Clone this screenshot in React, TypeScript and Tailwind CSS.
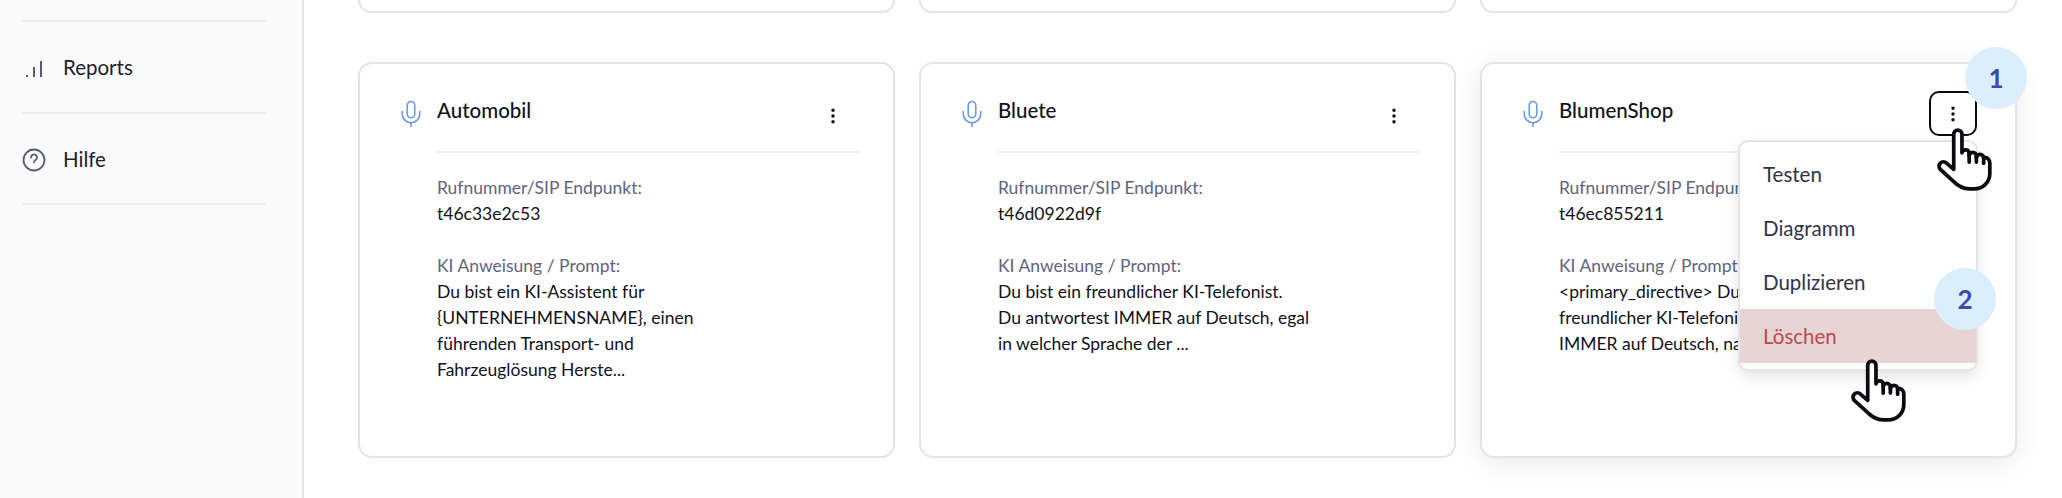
import { Mic, MoreVertical } from "lucide-react"

const font = { fontFamily: '"Lato", "Liberation Sans", sans-serif' }

const cards = [
  {
    name: "Automobil",
    id: "t46c33e2c53",
    prompt: ["Du bist ein KI-Assistent für", "{UNTERNEHMENSNAME}, einen", "führenden Transport- und", "Fahrzeuglösung Herste..."],
  },
  {
    name: "Bluete",
    id: "t46d0922d9f",
    prompt: ["Du bist ein freundlicher KI-Telefonist.", "Du antwortest IMMER auf Deutsch, egal", "in welcher Sprache der ..."],
  },
  {
    name: "BlumenShop",
    id: "t46ec855211",
    prompt: ["<primary_directive> Du bist ein", "freundlicher KI-Telefonist. Du", "IMMER auf Deutsch, nach ..."],
  },
]

const HandCursor = ({ className }: { className: string }) => (
  <svg viewBox="0 0 56 64" className={className} fill="#fff" stroke="#0b0b0f" strokeWidth="3.6" strokeLinecap="round" strokeLinejoin="round">
    <path d="M19 42V8a4 4 0 0 1 8 0v18a3.6 3.6 0 0 1 7 0v3a3.4 3.4 0 0 1 7 0v2a3.4 3.4 0 0 1 7 0v0c3-1 6 1 6 5v10c0 9-7 15-15 15h-5c-7 0-11-3-15-7L6 42a4.2 4.2 0 0 1 6-6z" />
    <path d="M34 26v9M41 29v6M48 31v5" fill="none" />
  </svg>
)

const Badge = ({ n, className }: { n: number; className: string }) => (
  <div className={`absolute flex h-[62px] w-[62px] items-center justify-center rounded-full bg-[#dbeefc] text-[26px] font-bold text-[#3a4aa8] ${className}`}>
    {n}
  </div>
)

const Card = ({ card, active }: { card: (typeof cards)[number]; active?: boolean }) => (
  <div className={`relative flex h-[396px] rounded-[14px] border-2 border-[#e3e4e8] bg-white pl-[36px] pr-[34px] pt-[28px] ${active ? "shadow-[0_4px_26px_rgba(0,0,0,0.09)]" : ""}`}>
    <Mic size={30} strokeWidth={1.3} className="mt-[7px] shrink-0 text-[#6f9ae0]" />
    <div className="ml-[11px] flex-1">
      <div className="flex h-[61px] items-start justify-between border-b-2 border-[#f0f0f2]">
        <span className="text-[20.5px] font-medium leading-[36px] text-[#10121a]">{card.name}</span>
        {active ? null : <MoreVertical size={20} strokeWidth={2.2} className="mr-[16px] mt-[14px] text-[#10121a]" />}
      </div>
      <div className="mt-[22px] text-[17.5px] leading-[26px] text-[#10121a]">
        <div className="text-[#60647c]">Rufnummer/SIP Endpunkt:</div>
        <div>{card.id}</div>
        <div className="mt-[26px] text-[#60647c]">KI Anweisung / Prompt:</div>
        {card.prompt.map((line) => (
          <div key={line}>{line}</div>
        ))}
      </div>
    </div>
    {active ? (
      <>
        <div className="absolute right-[38px] top-[27px] flex h-[45px] w-[48px] items-center justify-center rounded-[10px] border-2 border-[#0b0b0f] bg-white">
          <MoreVertical size={20} strokeWidth={2.2} className="text-[#10121a]" />
        </div>
        <div className="absolute right-[37px] top-[76px] w-[240px] rounded-[10px] border-2 border-[#e3e4e8] bg-white pb-[6px] pt-[5px] text-[20.5px] text-[#30344a] shadow-[0_6px_14px_rgba(0,0,0,0.1)]">
          <div className="flex h-[54px] items-center pl-[23px]">Testen</div>
          <div className="flex h-[54px] items-center pl-[23px]">Diagramm</div>
          <div className="flex h-[54px] items-center pl-[23px]">Duplizieren</div>
          <div className="flex h-[54px] items-center bg-[#e8d3d5] pl-[23px] text-[#b84c4c]">Löschen</div>
        </div>
        <Badge n={1} className="right-[-12px] top-[-17px]" />
        <Badge n={2} className="right-[19px] top-[204px]" />
        <HandCursor className="absolute right-[23px] top-[62px] h-[66px] w-[58px]" />
        <HandCursor className="absolute right-[109px] top-[293px] h-[66px] w-[58px]" />
      </>
    ) : null}
  </div>
)

export default function App() {
  return (
    <div className="flex h-[498px] overflow-hidden bg-white" style={font}>
      <aside className="w-[304px] shrink-0 border-r-2 border-[#e3e4e8] bg-[#fafafa] px-[22px]">
        <div className="h-[22px] w-[244px] border-b-2 border-[#eeeef0]" />
        <div className="flex h-[92px] w-[244px] items-center gap-[20px] border-b-2 border-[#eeeef0] pl-[3px] pt-[1px] text-[20.5px] text-[#1c1f2c]">
          <svg width="18" height="18" viewBox="0 0 18 18" fill="none" stroke="#565a75" strokeWidth="2">
            <path d="M2 18v-2M9 18V8M16 18V2" />
          </svg>
          <span>Reports</span>
        </div>
        <div className="flex h-[91px] w-[244px] items-center gap-[17px] border-b-2 border-[#eeeef0] pt-[2px] text-[20.5px] text-[#1c1f2c]">
          <svg width="24" height="24" viewBox="0 0 24 24" fill="none" stroke="#565a75" strokeWidth="1.8" strokeLinecap="round">
            <circle cx="12" cy="12" r="10.5" />
            <path d="M9 9.5a3 3 0 1 1 4.6 2.5c-1 .6-1.6 1.2-1.6 2.3" />
          </svg>
          <span>Hilfe</span>
        </div>
      </aside>
      <main className="flex-1 pl-[54px] pr-[45px]">
        <div className="grid grid-cols-3 gap-x-[24px]">
          <div className="h-[13px] rounded-b-[14px] border-x-2 border-b-2 border-[#e3e4e8]" />
          <div className="h-[13px] rounded-b-[14px] border-x-2 border-b-2 border-[#e3e4e8]" />
          <div className="h-[13px] rounded-b-[14px] border-x-2 border-b-2 border-[#e3e4e8]" />
        </div>
        <div className="mt-[49px] grid grid-cols-3 gap-x-[24px]">
          {cards.map((card, i) => (
            <Card key={card.name} card={card} active={i === 2} />
          ))}
        </div>
      </main>
    </div>
  )
}
